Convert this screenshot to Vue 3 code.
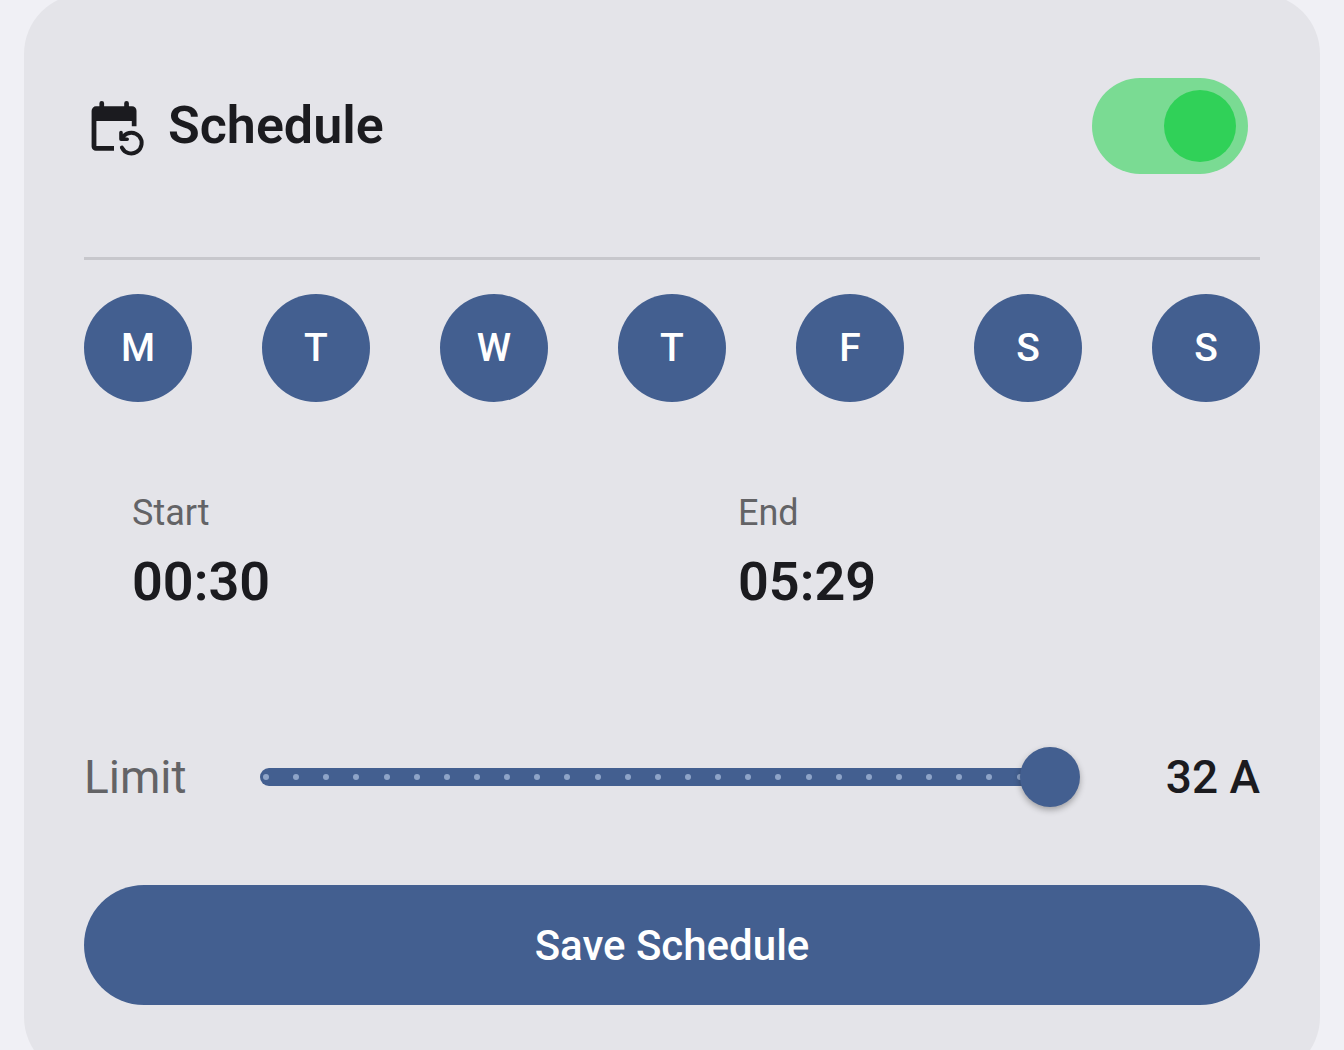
<script setup>
import { ref } from 'vue'

const enabled = ref(true)
const days = ref([
  { name: 'Monday', on: true },
  { name: 'Tuesday', on: true },
  { name: 'Wednesday', on: true },
  { name: 'Thursday', on: true },
  { name: 'Friday', on: true },
  { name: 'Saturday', on: true },
  { name: 'Sunday', on: true }
])
const times = [
  { label: 'Start', value: '00:30' },
  { label: 'End', value: '05:29' }
]
const minLimit = 6
const maxLimit = 32
const limit = ref(32)
</script>

<template>
  <main class="page">
    <section class="card">
      <header class="header">
        <svg class="icon" viewBox="0 -1 66 66" aria-hidden="true">
          <path
            fill="currentColor"
            fill-rule="evenodd"
            d="M15.4 12.3V9.3a2.3 2.3 0 0 1 4.7 0v3H40.2V9.3a2.3 2.3 0 0 1 4.7 0v3H48a4.5 4.5 0 0 1 4.5 4.5V32.2H47.8V27H12.4V52H30v4.8H12A4.4 4.4 0 0 1 7.6 52.4V16.8A4.5 4.5 0 0 1 12 12.3Z"
          />
          <path
            fill="none"
            stroke="currentColor"
            stroke-width="4"
            stroke-linecap="round"
            d="M37.9 53.6A10.4 10.4 0 1 0 39.6 42"
          />
          <path
            fill="none"
            stroke="currentColor"
            stroke-width="3.6"
            stroke-linecap="round"
            stroke-linejoin="round"
            d="M37 38.6V45.2H43.2"
          />
          <path fill="currentColor" d="M37 45.2V39L43.2 45.2Z" />
        </svg>
        <h1 class="title" id="schedule-title">Schedule</h1>
        <input
          v-model="enabled"
          class="switch"
          type="checkbox"
          role="switch"
          aria-labelledby="schedule-title"
        />
      </header>

      <hr class="divider" />

      <div class="days">
        <button
          v-for="day in days"
          :key="day.name"
          type="button"
          class="day"
          :class="{ off: !day.on }"
          :aria-label="day.name"
          :aria-pressed="day.on"
          @click="day.on = !day.on"
        >
          {{ day.name[0] }}
        </button>
      </div>

      <div class="times">
        <button v-for="time in times" :key="time.label" type="button" class="time">
          <span class="time-label">{{ time.label }}</span>
          <span class="time-value">{{ time.value }}</span>
        </button>
      </div>

      <div class="limit">
        <label class="limit-label" for="limit">Limit</label>
        <div class="slider">
          <div class="track" aria-hidden="true">
            <i v-for="n in maxLimit - minLimit + 1" :key="n" class="tick"></i>
          </div>
          <input
            id="limit"
            v-model.number="limit"
            class="range"
            type="range"
            :min="minLimit"
            :max="maxLimit"
          />
        </div>
        <output class="limit-value" for="limit">{{ limit }} A</output>
      </div>

      <button type="button" class="save">Save Schedule</button>
    </section>
  </main>
</template>

<style>
body {
  margin: 0;
  background: #f0f0f5;
}
</style>

<style scoped>
.page {
  box-sizing: border-box;
  max-height: 100vh;
  overflow-y: auto;
  scrollbar-width: none;
  padding: 0 24px;
  font-family: Roboto, "Liberation Sans", sans-serif;
  color: #1b1b1f;
}

.card {
  margin-top: -6px;
  padding: 60px 60px 72px;
  border-radius: 60px;
  background: #e4e4e9;
}

button {
  border: 0;
  padding: 0;
  font: inherit;
  cursor: pointer;
}

.header {
  display: flex;
  align-items: center;
  height: 144px;
  padding-right: 12px;
}

.icon {
  width: 66px;
  height: 66px;
}

.title {
  flex: 1;
  margin: 0 0 0 18px;
  font-size: 52px;
  line-height: 74px;
  font-weight: 600;
}

.switch {
  appearance: none;
  box-sizing: border-box;
  width: 156px;
  height: 96px;
  margin: 0;
  padding: 12px;
  border-radius: 48px;
  background: #c4c6cf;
  cursor: pointer;
}

.switch::before {
  content: "";
  display: block;
  width: 72px;
  height: 72px;
  border-radius: 50%;
  background: #74777f;
}

.switch:checked {
  background: #7adb93;
}

.switch:checked::before {
  margin-left: auto;
  background: #30d158;
}

.divider {
  height: 3px;
  margin: 59px 0 34px;
  border: 0;
  background: #c7c7cc;
}

.days {
  display: flex;
  justify-content: space-between;
}

.day {
  width: 108px;
  height: 108px;
  border-radius: 50%;
  background: #435f90;
  color: #fff;
  font-size: 39px;
  line-height: 61px;
  font-weight: 500;
}

.day.off {
  background: #c7c7cc;
  color: #1b1b1f;
}

.times {
  display: grid;
  grid-template-columns: 1fr 1fr;
  gap: 36px;
  margin-top: 48px;
}

.time {
  display: flex;
  flex-direction: column;
  padding: 36px 48px;
  background: none;
  color: inherit;
  text-align: left;
}

.time-label {
  color: #636366;
  font-size: 36px;
  line-height: 54px;
}

.time-value {
  font-size: 54px;
  line-height: 84px;
  font-weight: 600;
}

.limit {
  display: flex;
  align-items: center;
  height: 144px;
  margin-top: 45px;
  font-size: 46px;
  line-height: 72px;
}

.limit-label {
  width: 152px;
  color: #636366;
}

.slider {
  display: grid;
  flex: 1;
  align-items: center;
}

.track,
.range {
  grid-area: 1 / 1;
}

.track {
  display: flex;
  align-items: center;
  justify-content: space-between;
  height: 18px;
  margin: 0 24px;
  padding: 0 3px;
  border-radius: 9px;
  background: #435f90;
}

.tick {
  width: 6px;
  height: 6px;
  border-radius: 50%;
  background: #8ea4c8;
}

.range {
  appearance: none;
  width: 100%;
  height: 60px;
  margin: 0;
  background: none;
  cursor: pointer;
}

.range::-webkit-slider-thumb {
  appearance: none;
  width: 60px;
  height: 60px;
  border: 0;
  border-radius: 50%;
  background: #435f90;
  box-shadow: 0 3px 6px rgba(0, 0, 0, 0.3);
}

.limit-value {
  width: 180px;
  font-weight: 500;
  text-align: right;
}

.save {
  width: 100%;
  height: 120px;
  margin-top: 36px;
  border-radius: 60px;
  background: #435f90;
  color: #fff;
  font-size: 42px;
  line-height: 61px;
  font-weight: 500;
}
</style>
